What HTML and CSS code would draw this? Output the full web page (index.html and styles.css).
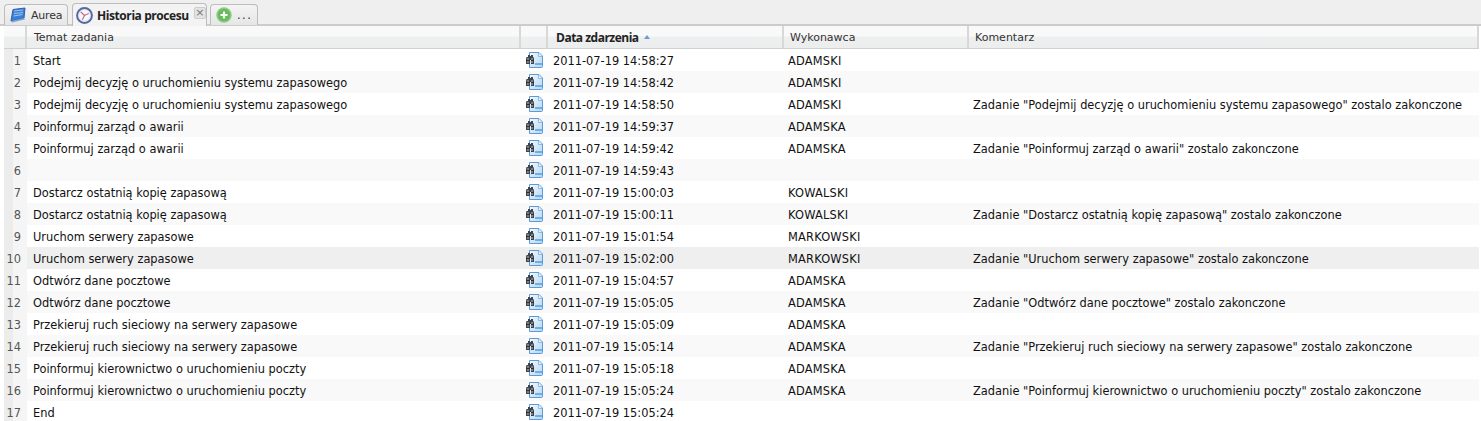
FILE: index.html
```html
<!DOCTYPE html>
<html lang="pl">
<head>
<meta charset="utf-8">
<title>Historia procesu</title>
<link rel="stylesheet" href="styles.css">
</head>
<body>
<svg class="defs" width="0" height="0" aria-hidden="true">
  <defs>
    <linearGradient id="docfill" x1="0" y1="0" x2="1" y2="1"><stop offset="0" stop-color="#f4f9fe"/><stop offset="1" stop-color="#b5d6f2"/></linearGradient>
    <symbol id="doc" viewBox="0 0 18 16">
      <path d="M3.500 .5H13L16.500 4V14.500Q16.500 15.500 15.500 15.500H3.500Z" fill="url(#docfill)" stroke="#5b9bd8"/>
      <path d="M12.500 .8V4.500H16.200" fill="#e6f1fb" stroke="#8dbbe6"/>
      <rect x="9" y="11" width="7" height="2" fill="#6db0e6"/>
      <path d="M2 3h2v1h1V3h2v2h.500l.500 2v5H5V8H4v4H0V7l.500-2H2Z" fill="#3f454d"/>
      <path d="M1.500 6h1v5h-1ZM5.500 6h1v5h-1Z" fill="#b4bcc6"/>
      <path d="M0 8.500h4M5 8.500h3" stroke="#2c3036"/>
    </symbol>
  </defs>
</svg>
<nav class="tabs">
  <div class="tab tab-plain tab-home">
    <svg class="tab-icon" viewBox="0 0 16 16" aria-hidden="true"><path d="M3 2.500L15 1 14 11 1 14Z" fill="#3c7fd6" stroke="#2a5ea8"/><path d="M4 4l9-1M4 6.500l9-1M3.500 9l9-1.500" stroke="#9cc6f2"/><path d="M1 14l13-3 1 1.500L2 15.500Z" fill="#7ba7dc"/></svg>
    <span>Aurea</span>
  </div>
  <div class="tab tab-active">
    <svg class="tab-icon tab-icon-large" viewBox="0 0 16 16" aria-hidden="true"><circle cx="8" cy="8" r="7" fill="#e4eaf6" stroke="#56699f" stroke-width="1.800"/><circle cx="8" cy="8" r="4.800" fill="#f7f8fc"/><path d="M8 8L4.500 4.500M8 8l4-2M8 8l-2 4" stroke="#c2607a" fill="none"/></svg>
    <span class="tab-title">Historia procesu</span>
    <span class="tab-close" aria-hidden="true">×</span>
  </div>
  <div class="tab tab-plain tab-add">
    <svg class="tab-icon" viewBox="0 0 16 16" aria-hidden="true"><circle cx="8" cy="8" r="7" fill="#66bb5a" stroke="#8fcc86" stroke-width="1.500"/><path d="M8 4.500v7M4.500 8h7" stroke="#fff" stroke-width="2.200"/></svg>
    <span class="tab-more">...</span>
  </div>
</nav>
<main class="grid-wrap">
  <div class="grid header">
    <div class="num"></div>
    <div class="th th-topic">Temat zadania</div>
    <div class="th th-icon"></div>
    <div class="th th-date">Data zdarzenia <span class="sort"></span></div>
    <div class="th">Wykonawca</div>
    <div class="th">Komentarz</div>
  </div>
  <div class="grid row"><div class="num">1</div><div class="td">Start</div><div class="td-icon"><svg class="doc"><use href="#doc"/></svg></div><div class="td td-date">2011-07-19 14:58:27</div><div class="td td-user">ADAMSKI</div><div class="td td-note"></div></div>
  <div class="grid row alt"><div class="num">2</div><div class="td">Podejmij decyzję o uruchomieniu systemu zapasowego</div><div class="td-icon"><svg class="doc"><use href="#doc"/></svg></div><div class="td td-date">2011-07-19 14:58:42</div><div class="td td-user">ADAMSKI</div><div class="td td-note"></div></div>
  <div class="grid row"><div class="num">3</div><div class="td">Podejmij decyzję o uruchomieniu systemu zapasowego</div><div class="td-icon"><svg class="doc"><use href="#doc"/></svg></div><div class="td td-date">2011-07-19 14:58:50</div><div class="td td-user">ADAMSKI</div><div class="td td-note">Zadanie "Podejmij decyzję o uruchomieniu systemu zapasowego" zostalo zakonczone</div></div>
  <div class="grid row alt"><div class="num">4</div><div class="td">Poinformuj zarząd o awarii</div><div class="td-icon"><svg class="doc"><use href="#doc"/></svg></div><div class="td td-date">2011-07-19 14:59:37</div><div class="td td-user">ADAMSKA</div><div class="td td-note"></div></div>
  <div class="grid row"><div class="num">5</div><div class="td">Poinformuj zarząd o awarii</div><div class="td-icon"><svg class="doc"><use href="#doc"/></svg></div><div class="td td-date">2011-07-19 14:59:42</div><div class="td td-user">ADAMSKA</div><div class="td td-note">Zadanie "Poinformuj zarząd o awarii" zostalo zakonczone</div></div>
  <div class="grid row alt"><div class="num">6</div><div class="td"></div><div class="td-icon"><svg class="doc"><use href="#doc"/></svg></div><div class="td td-date">2011-07-19 14:59:43</div><div class="td td-user"></div><div class="td td-note"></div></div>
  <div class="grid row"><div class="num">7</div><div class="td">Dostarcz ostatnią kopię zapasową</div><div class="td-icon"><svg class="doc"><use href="#doc"/></svg></div><div class="td td-date">2011-07-19 15:00:03</div><div class="td td-user">KOWALSKI</div><div class="td td-note"></div></div>
  <div class="grid row alt"><div class="num">8</div><div class="td">Dostarcz ostatnią kopię zapasową</div><div class="td-icon"><svg class="doc"><use href="#doc"/></svg></div><div class="td td-date">2011-07-19 15:00:11</div><div class="td td-user">KOWALSKI</div><div class="td td-note">Zadanie "Dostarcz ostatnią kopię zapasową" zostalo zakonczone</div></div>
  <div class="grid row"><div class="num">9</div><div class="td">Uruchom serwery zapasowe</div><div class="td-icon"><svg class="doc"><use href="#doc"/></svg></div><div class="td td-date">2011-07-19 15:01:54</div><div class="td td-user">MARKOWSKI</div><div class="td td-note"></div></div>
  <div class="grid row hover"><div class="num">10</div><div class="td">Uruchom serwery zapasowe</div><div class="td-icon"><svg class="doc"><use href="#doc"/></svg></div><div class="td td-date">2011-07-19 15:02:00</div><div class="td td-user">MARKOWSKI</div><div class="td td-note">Zadanie "Uruchom serwery zapasowe" zostalo zakonczone</div></div>
  <div class="grid row"><div class="num">11</div><div class="td">Odtwórz dane pocztowe</div><div class="td-icon"><svg class="doc"><use href="#doc"/></svg></div><div class="td td-date">2011-07-19 15:04:57</div><div class="td td-user">ADAMSKA</div><div class="td td-note"></div></div>
  <div class="grid row alt"><div class="num">12</div><div class="td">Odtwórz dane pocztowe</div><div class="td-icon"><svg class="doc"><use href="#doc"/></svg></div><div class="td td-date">2011-07-19 15:05:05</div><div class="td td-user">ADAMSKA</div><div class="td td-note">Zadanie "Odtwórz dane pocztowe" zostalo zakonczone</div></div>
  <div class="grid row"><div class="num">13</div><div class="td">Przekieruj ruch sieciowy na serwery zapasowe</div><div class="td-icon"><svg class="doc"><use href="#doc"/></svg></div><div class="td td-date">2011-07-19 15:05:09</div><div class="td td-user">ADAMSKA</div><div class="td td-note"></div></div>
  <div class="grid row alt"><div class="num">14</div><div class="td">Przekieruj ruch sieciowy na serwery zapasowe</div><div class="td-icon"><svg class="doc"><use href="#doc"/></svg></div><div class="td td-date">2011-07-19 15:05:14</div><div class="td td-user">ADAMSKA</div><div class="td td-note">Zadanie "Przekieruj ruch sieciowy na serwery zapasowe" zostalo zakonczone</div></div>
  <div class="grid row"><div class="num">15</div><div class="td">Poinformuj kierownictwo o uruchomieniu poczty</div><div class="td-icon"><svg class="doc"><use href="#doc"/></svg></div><div class="td td-date">2011-07-19 15:05:18</div><div class="td td-user">ADAMSKA</div><div class="td td-note"></div></div>
  <div class="grid row alt"><div class="num">16</div><div class="td">Poinformuj kierownictwo o uruchomieniu poczty</div><div class="td-icon"><svg class="doc"><use href="#doc"/></svg></div><div class="td td-date">2011-07-19 15:05:24</div><div class="td td-user">ADAMSKA</div><div class="td td-note">Zadanie "Poinformuj kierownictwo o uruchomieniu poczty" zostalo zakonczone</div></div>
  <div class="grid row"><div class="num">17</div><div class="td">End</div><div class="td-icon"><svg class="doc"><use href="#doc"/></svg></div><div class="td td-date">2011-07-19 15:05:24</div><div class="td td-user"></div><div class="td td-note"></div></div>
</main>
</body>
</html>
```

FILE: styles.css
```css
html, body {
  margin: 0;
  height: 421px;
  overflow: hidden;
  background: #fff;
  font-family: "DejaVu Sans", "Liberation Sans", sans-serif;
  font-size: 11.4px;
  color: #111;
}
.defs { position: absolute; }

.tabs {
  display: flex;
  align-items: flex-end;
  height: 24px;
  padding-left: 4px;
  background: #efefef;
  border-bottom: 2px solid #ccc;
}
.tab {
  display: flex;
  align-items: center;
  box-sizing: border-box;
  gap: 5px;
  height: 21px;
  border: 1px solid #bdbdbd;
  border-bottom: 0;
  border-radius: 4px 4px 0 0;
  color: #333;
  margin-bottom: -1px;
  white-space: nowrap;
}
.tab-plain {
  background: linear-gradient(#f4f4f4, #e6e6e6);
  padding-left: 5px;
}
.tab-home { width: 64px; }
.tab-home span { font-size: 11px; letter-spacing: -.2px; }
.tab-active {
  width: 135px;
  background: #f3f3f3;
  padding-left: 3px;
  gap: 4px;
  height: 23px;
  margin-left: 4px;
  margin-bottom: -2px;
}
.tab-title {
  flex: none;
  font-family: "Open Sans", sans-serif;
  font-size: 12px;
  font-weight: 700;
  letter-spacing: -.42px;
  color: #222;
}
.tab-add { width: 48px; margin-left: 3px; }
.tab-more { letter-spacing: 1.5px; }
.tab-icon { width: 16px; height: 16px; flex: none; }
.tab-icon-large { width: 17px; height: 17px; }
.tab-close {
  flex: none;
  width: 10px;
  height: 10px;
  margin: 0 0 5px 1px;
  border: 1px solid #ccc;
  border-radius: 2px;
  background: #e4e4e4;
  font-size: 11px;
  line-height: 10px;
  text-align: center;
  color: #777;
}

.grid-wrap { padding: 0 2px 0 4px; }
.grid {
  display: grid;
  grid-template-columns: 23px 494px 27px 236px 185px 510px;
}
.header {
  height: 22px;
  background: linear-gradient(#f9f9f9 0, #f9f9f9 10px, #eeeff0 11px, #eceded 100%);
  border-bottom: 1px solid #d0d0d0;
}
.th {
  display: flex;
  align-items: center;
  padding-left: 6px;
  border-right: 2px solid #d8d8d8;
  box-sizing: border-box;
  color: #333;
  white-space: nowrap;
  font-size: 11px;
}
.th-topic { padding-left: 7px; }
.th-icon { padding: 0; }
.th-date {
  padding-left: 8px;
  font-family: "Open Sans", sans-serif;
  font-size: 12px;
  font-weight: 700;
  letter-spacing: -.5px;
  gap: 4px;
  color: #222;
}
.sort {
  width: 0;
  height: 0;
  margin-left: 1px;
  border: 3.500px solid transparent;
  border-top: 0;
  border-bottom: 4px solid #6d9ad4;
}
.header .num { border-right: 2px solid #d8d8d8; background: none; padding-top: 0; }
.row { height: 22px; align-items: stretch; }
.alt { background: #f9f9f9; }
.hover { background: #efefef; }
.num {
  display: flex;
  align-items: center;
  justify-content: flex-end;
  padding: 1px 6px 0 0;
  background: linear-gradient(90deg, #ececec 0, #ececec 9px, #f5f5f5 9px);
  color: #555;
  box-sizing: border-box;
}
.td {
  display: flex;
  align-items: center;
  padding: 1px 0 0 6px;
  white-space: nowrap;
  overflow: hidden;
  color: #111;
}
.td-date { padding-left: 5px; }
.td-user { padding-left: 4px; letter-spacing: .2px; }
.td-note { padding-left: 4px; }
.td-icon {
  display: flex;
  align-items: center;
  padding-left: 5px;
}
.doc { width: 18px; height: 16px; }
```
